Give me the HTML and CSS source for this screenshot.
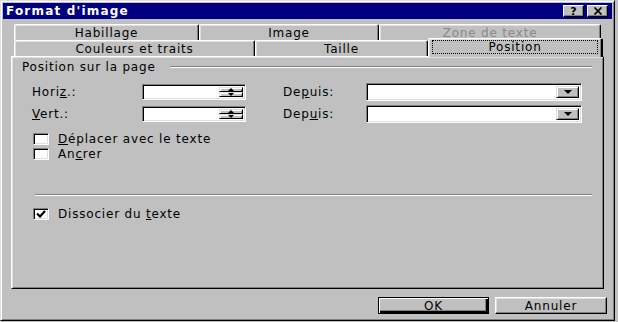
FILE: index.html
```html
<!DOCTYPE html>
<html>
<head>
<meta charset="utf-8">
<link rel="stylesheet" href="styles.css">
</head>
<body>
<div class="window">
  <div class="titlebar">
    <span class="title">Format d'image</span>
    <div class="tbtns">
      <span class="tbtn help">?</span>
      <span class="tbtn close"><svg width="10" height="8" viewBox="0 0 10 8"><path d="M1.5 0.5 L8.5 7.5 M8.5 0.5 L1.5 7.5" stroke="#000" stroke-width="1.7"/></svg></span>
    </div>
  </div>

  <div class="tabs">
    <div class="tabrow">
      <div class="tab t-hab">Habillage</div>
      <div class="tab t-img">Image</div>
      <div class="tab t-zone disabled">Zone de texte</div>
    </div>
    <div class="tabrow">
      <div class="tab t-coul">Couleurs et traits</div>
      <div class="tab t-taille">Taille</div>
      <div class="tab t-pos active"><span class="focus">Position</span></div>
    </div>
  </div>

  <div class="panel">
    <div class="group-head">
      <span class="group-label">Position sur la page</span>
      <span class="etch"></span>
    </div>

    <div class="fields">
      <span class="lbl">Hori<u>z</u>.:</span>
      <div class="field spin">
        <span class="spin-btns">
          <span class="sb"><i class="arr up"></i></span>
          <span class="sb"><i class="arr down"></i></span>
        </span>
      </div>
      <span class="lbl">De<u>p</u>uis:</span>
      <div class="field combo"><span class="drop"><i class="arr down big"></i></span></div>

      <span class="lbl"><u>V</u>ert.:</span>
      <div class="field spin">
        <span class="spin-btns">
          <span class="sb"><i class="arr up"></i></span>
          <span class="sb"><i class="arr down"></i></span>
        </span>
      </div>
      <span class="lbl">Dep<u>u</u>is:</span>
      <div class="field combo"><span class="drop"><i class="arr down big"></i></span></div>
    </div>

    <div class="checks">
      <div class="check"><span class="box"></span><span class="ctext"><u>D</u>éplacer avec le texte</span></div>
      <div class="check"><span class="box"></span><span class="ctext">An<u>c</u>rer</span></div>
    </div>

    <div class="sep"></div>

    <div class="check dissoc">
      <span class="box"><svg width="10" height="8" viewBox="0 0 10 8"><path d="M1 3.5 L4 6.5 L9 1" fill="none" stroke="#000" stroke-width="2.2"/></svg></span>
      <span class="ctext">Dissocier du <u>t</u>exte</span>
    </div>
  </div>

  <div class="buttons">
    <button class="btn default">OK</button>
    <button class="btn">Annuler</button>
  </div>
</div>
</body>
</html>
```

FILE: styles.css
```css
* { box-sizing: border-box; }

html, body {
  margin: 0;
  padding: 0;
  background: #c0c0c0;
}

body {
  width: 618px;
  height: 322px;
  overflow: hidden;
  font-family: "DejaVu Sans", Verdana, sans-serif;
  font-size: 12px;
  letter-spacing: 0.8px;
  color: #000;
}

u { text-decoration: underline; text-underline-offset: 1px; }

.window {
  width: 615px;
  height: 321px;
  background: #c0c0c0;
  border: 1px solid;
  border-color: #dfdfdf #000 #000 #dfdfdf;
  box-shadow: inset 1px 1px #fff, inset -1px -1px #808080;
  padding: 2px;
  display: flex;
  flex-direction: column;
}

/* Title bar */
.titlebar {
  height: 16px;
  background: #000080;
  display: flex;
  align-items: center;
  justify-content: space-between;
  padding: 0 4px 0 3px;
}

.title {
  color: #fff;
  font-weight: bold;
  font-size: 12px;
  letter-spacing: 1.2px;
}

.tbtns {
  display: flex;
  gap: 3px;
}

.tbtn {
  width: 21px;
  height: 12px;
  background: #c0c0c0;
  border: 1px solid;
  border-color: #fff #000 #000 #fff;
  box-shadow: inset -1px -1px #808080;
  display: flex;
  align-items: center;
  justify-content: center;
  font-weight: bold;
  font-size: 11px;
  letter-spacing: 0;
  line-height: 1;
}

/* Tabs */
.tabs {
  margin-top: 5px;
  margin-left: 11px;
}

.tabrow {
  display: flex;
  height: 16px;
}

.tab {
  height: 16px;
  border-top: 1px solid #fff;
  border-left: 1px solid #fff;
  border-right: 1px solid #000;
  border-radius: 2px 2px 0 0;
  box-shadow: inset -1px 0 #808080, inset 1px 1px #dfdfdf;
  background: #c0c0c0;
  display: flex;
  align-items: center;
  justify-content: center;
  white-space: nowrap;
}

.t-hab { width: 185px; }
.t-img { width: 180px; }
.t-zone { width: 222px; }
.t-coul { width: 241px; }
.t-taille { width: 173px; }
.t-pos { width: 175px; }

.tab.disabled {
  color: #8a8a8a;
}

.tab.active {
  position: relative;
  z-index: 1;
  height: 19px;
  margin-top: -2px;
  border-right: 2px solid #000;
  box-shadow: inset -1px 0 #808080, inset 1px 1px #dfdfdf;
  align-items: flex-start;
  padding-top: 1px;
}

.focus {
  width: calc(100% - 6px);
  height: 14px;
  border: 1px dotted #000;
  display: flex;
  align-items: center;
  justify-content: center;
}

/* Panel */
.panel {
  margin-left: 8px;
  width: 593px;
  height: 233px;
  border: 1px solid;
  border-color: #fff #000 #000 #fff;
  box-shadow: inset 1px 1px #dfdfdf, inset -1px -1px #808080;
  padding: 3px 11px 0 10px;
}

.group-head {
  display: flex;
  align-items: center;
  height: 14px;
}

.group-label {
  white-space: nowrap;
}

.etch {
  flex: 1;
  height: 2px;
  margin-left: 14px;
  border-top: 1px solid #808080;
  border-bottom: 1px solid #fff;
}

.fields {
  margin-top: 9px;
  margin-left: 10px;
  display: grid;
  grid-template-columns: 110px 141px 83px 216px;
  grid-auto-rows: 18px;
  row-gap: 4px;
  align-items: center;
}

.lbl { white-space: nowrap; }

.field {
  background: #fff;
  border: 1px solid;
  border-color: #808080 #fff #fff #808080;
  box-shadow: inset 1px 1px #000, inset -1px -1px #dfdfdf;
  display: flex;
  justify-content: flex-end;
  padding: 2px;
}

.spin {
  width: 104px;
  height: 16px;
}

.spin-btns {
  width: 24px;
  display: flex;
  flex-direction: column;
}

.sb {
  flex: 1;
  background: #c0c0c0;
  border: 1px solid;
  border-color: #dfdfdf #000 #000 #dfdfdf;
  box-shadow: inset 1px 1px #fff, inset -1px 0 #808080;
  display: flex;
  align-items: center;
  justify-content: center;
}

.arr {
  display: block;
  width: 0;
  height: 0;
  border-left: 3px solid transparent;
  border-right: 3px solid transparent;
}

.arr.up { border-bottom: 3px solid #000; }
.arr.down { border-top: 3px solid #000; }
.arr.big {
  border-left-width: 4px;
  border-right-width: 4px;
  border-top-width: 4px;
}

.combo {
  width: 216px;
  height: 18px;
}

.drop {
  width: 23px;
  background: #c0c0c0;
  border: 1px solid;
  border-color: #dfdfdf #000 #000 #dfdfdf;
  box-shadow: inset 1px 1px #fff, inset -1px -1px #808080;
  display: flex;
  align-items: center;
  justify-content: center;
}

/* Checkboxes */
.checks {
  margin-top: 8px;
}

.check {
  display: flex;
  align-items: center;
  height: 15px;
  padding-left: 11px;
}

.box {
  width: 16px;
  height: 12px;
  background: #fff;
  border: 1px solid;
  border-color: #808080 #fff #fff #808080;
  box-shadow: inset 1px 1px #000, inset -1px -1px #dfdfdf;
  display: flex;
  align-items: center;
  justify-content: center;
  flex: none;
}

.ctext {
  margin-left: 9px;
  white-space: nowrap;
}

.sep {
  margin: 33px 0 0 13px;
  height: 2px;
  border-top: 1px solid #808080;
  border-bottom: 1px solid #fff;
}

.dissoc {
  margin-top: 10px;
}

/* Buttons */
.buttons {
  margin-top: 8px;
  display: flex;
  justify-content: flex-end;
  gap: 6px;
  padding-right: 5px;
}

.btn {
  height: 17px;
  padding: 0;
  background: #c0c0c0;
  font-family: inherit;
  font-size: 12px;
  letter-spacing: 0.8px;
  color: #000;
  border: 1px solid;
  border-color: #fff #000 #000 #fff;
  box-shadow: inset -1px -1px #808080, inset 1px 1px #dfdfdf;
  display: flex;
  align-items: center;
  justify-content: center;
}

.btn:first-child { width: 111px; }
.btn:last-child { width: 112px; }

.btn.default {
  border: 1px solid #000;
  box-shadow: inset 1px 1px #fff, inset -2px -2px #000, inset -3px -3px #808080;
}
```
